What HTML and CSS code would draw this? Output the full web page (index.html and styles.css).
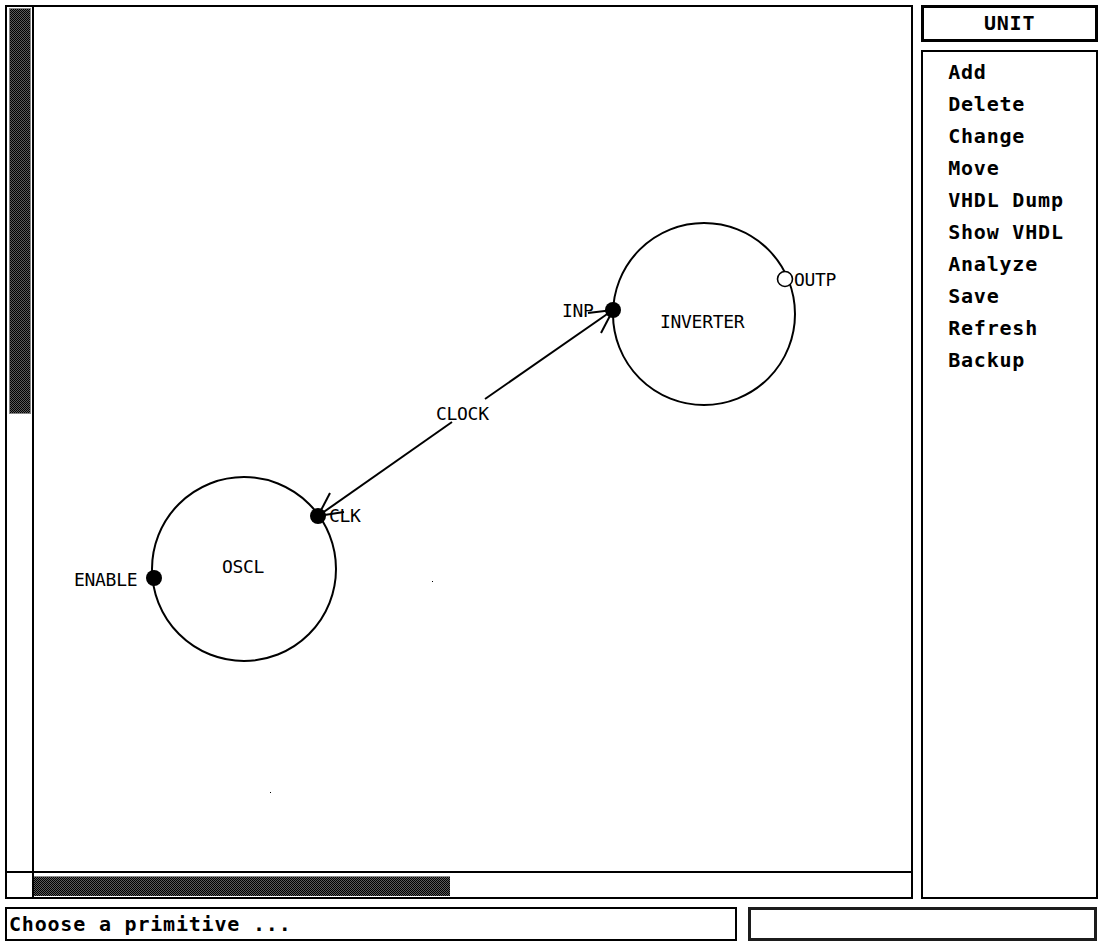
FILE: index.html
```html
<!DOCTYPE html>
<html lang="en">

<head>
    <meta charset="UTF-8">
    <title>Unit Editor</title>
    <link rel="stylesheet" href="styles.css">
</head>

<body>
    <div class="workspace">
        <div class="editor">
            <div class="vscroll">
                <div class="thumb thumb-v"></div>
            </div>
            <div class="canvas">
                <!-- drawing area, page coordinates -->
                <svg class="drawing" viewBox="34 7 878 864" width="878" height="864">
                    <g fill="none" stroke="#000" stroke-width="2">
                        <circle cx="704" cy="314" r="91" />
                        <circle cx="244" cy="569" r="92" />
                        <!-- CLOCK net, broken round its label -->
                        <line x1="318" y1="516" x2="452" y2="422" />
                        <line x1="485" y1="399" x2="613" y2="310" />
                        <!-- arrow heads -->
                        <line x1="613" y1="310" x2="588" y2="313" />
                        <line x1="613" y1="310" x2="601" y2="333" />
                        <line x1="318" y1="516" x2="330" y2="493" />
                        <line x1="318" y1="516" x2="344" y2="512" />
                    </g>
                    <g fill="#000">
                        <circle cx="613" cy="310" r="8" />
                        <circle cx="318" cy="516" r="8" />
                        <circle cx="154" cy="578" r="8" />
                    </g>
                    <circle cx="785" cy="279" r="7.5" fill="#fff" stroke="#000" stroke-width="1.6" />
                    <g class="label">
                        <text x="562" y="317">INP</text>
                        <text x="660" y="328">INVERTER</text>
                        <text x="794" y="286">OUTP</text>
                        <text x="436" y="420">CLOCK</text>
                        <text x="329" y="522">CLK</text>
                        <text x="222" y="573">OSCL</text>
                        <text x="74" y="586">ENABLE</text>
                    </g>
                    <rect x="432" y="581" width="1" height="1" fill="#000" />
                    <rect x="270" y="792" width="1" height="1" fill="#000" />
                </svg>
            </div>
            <div class="corner"></div>
            <div class="hscroll">
                <div class="thumb thumb-h"></div>
            </div>
        </div>

        <aside class="side">
            <div class="mode">UNIT</div>
            <ul class="menu">
                <li>Add</li>
                <li>Delete</li>
                <li>Change</li>
                <li>Move</li>
                <li>VHDL Dump</li>
                <li>Show VHDL</li>
                <li>Analyze</li>
                <li>Save</li>
                <li>Refresh</li>
                <li>Backup</li>
            </ul>
        </aside>
    </div>

    <footer class="status">
        <div class="prompt">Choose a primitive ...</div>
        <div class="message"></div>
    </footer>
</body>

</html>
```

FILE: styles.css
```css
body {
    margin: 0;
    padding: 5px;
    background: #fff;
    color: #000;
    font-family: 'DejaVu Sans Mono', 'Liberation Mono', monospace;
}

.workspace {
    display: flex;
    gap: 8px;
    height: 894px;
}

.editor {
    width: 909px;
    box-sizing: border-box;
    border: 2px solid #000;
    display: grid;
    grid-template-columns: 27px 1fr;
    grid-template-rows: 1fr 26px;
}

.vscroll {
    border-right: 2px solid #000;
    padding: 1px 1px 0 2px;
}

.thumb {
    background: repeating-conic-gradient(#000 0 25%, #5a5a5a 0 50%) 0 0 / 2px 2px;
}

.thumb-v {
    height: 404px;
    border: 1px solid #888;
}

.canvas {
    position: relative;
    overflow: hidden;
}

.drawing {
    display: block;
}

.label text {
    font-family: 'DejaVu Sans Mono', monospace;
    font-size: 18px;
    letter-spacing: -0.3px;
    fill: #000;
}

.corner {
    border-top: 2px solid #000;
    border-right: 2px solid #000;
}

.hscroll {
    border-top: 2px solid #000;
    padding: 3px 0 1px 0;
}

.thumb-h {
    width: 416px;
    height: 100%;
    border-top: 1px solid #888;
    box-sizing: border-box;
}

.side {
    width: 177px;
    display: flex;
    flex-direction: column;
    gap: 8px;
}

.mode,
.menu,
.prompt {
    font-weight: bold;
    font-size: 20px;
    letter-spacing: 0.8px;
}

.mode {
    height: 37px;
    box-sizing: border-box;
    border: 3px solid #000;
    text-align: center;
    line-height: 31px;
}

.menu {
    flex: 1;
    list-style: none;
    margin: 0;
    padding: 4px 0 0 25px;
    border: 2px solid #000;
}

.menu li {
    line-height: 32px;
}

.status {
    display: flex;
    gap: 11px;
    margin-top: 8px;
    height: 34px;
}

.prompt {
    width: 732px;
    box-sizing: border-box;
    border: 2px solid #000;
    padding-left: 2px;
    line-height: 30px;
}

.message {
    width: 349px;
    box-sizing: border-box;
    border: 3px solid #1c1c1c;
}
```
